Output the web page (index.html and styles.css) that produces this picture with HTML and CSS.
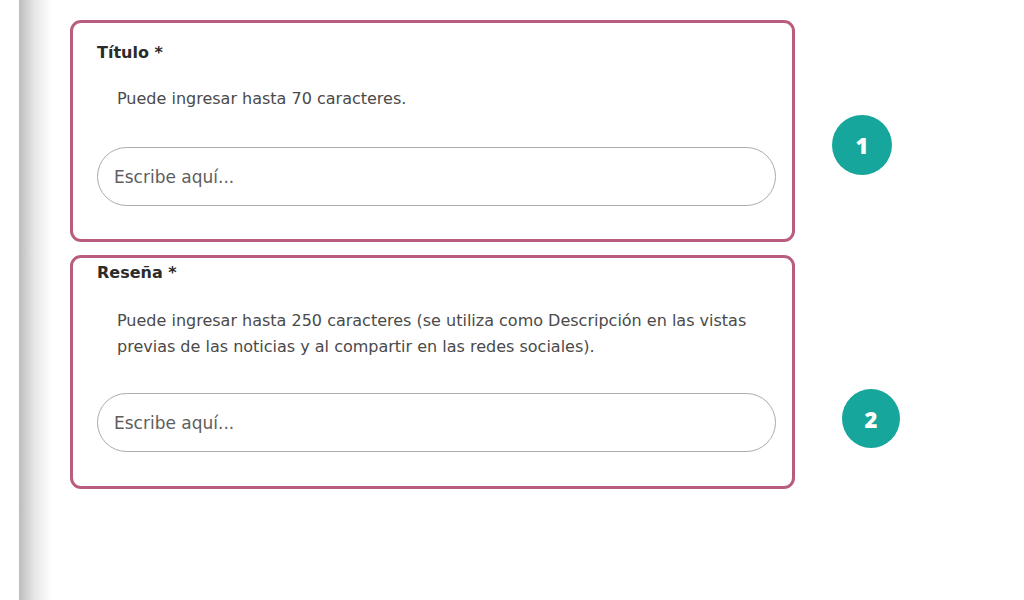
FILE: index.html
```html
<!DOCTYPE html>
<html lang="es">
<head>
<meta charset="utf-8">
<title>Formulario</title>
<link rel="stylesheet" href="styles.css">
</head>
<body>
<div class="page">
  <div class="rail"></div>
  <main class="form">
    <div class="row">
      <section class="field field--title">
        <label class="label" for="titulo">Título *</label>
        <p class="help">Puede ingresar hasta 70 caracteres.</p>
        <input id="titulo" class="input" type="text" placeholder="Escribe aquí...">
      </section>
      <span class="badge badge--one">1</span>
    </div>
    <div class="row">
      <section class="field field--review">
        <label class="label" for="resena">Reseña *</label>
        <p class="help">Puede ingresar hasta 250 caracteres (se utiliza como Descripción en las vistas previas de las noticias y al compartir en las redes sociales).</p>
        <input id="resena" class="input" type="text" placeholder="Escribe aquí...">
      </section>
      <span class="badge badge--two">2</span>
    </div>
  </main>
</div>
</body>
</html>
```

FILE: styles.css
```css
html, body {
  margin: 0;
  padding: 0;
  background: #ffffff;
}

body {
  font-family: "DejaVu Sans", "Open Sans", sans-serif;
  color: #333333;
}

.page {
  display: flex;
  width: 1024px;
  height: 600px;
  overflow: hidden;
}

.rail {
  flex: 0 0 52px;
  background: linear-gradient(to right, #ffffff 0, #ffffff 19px, #bcbcbc 19px, #e6e6e6 34px, #ffffff 52px);
}

.form {
  display: flex;
  flex-direction: column;
  gap: 13px;
  margin-left: 18px;
  padding-top: 20px;
}

.row {
  display: flex;
  align-items: flex-start;
}

.field {
  box-sizing: border-box;
  width: 725px;
  border: 3px solid #b95d80;
  border-radius: 11px;
  padding: 0 16px 0 24px;
  display: flex;
  flex-direction: column;
}

.field--title {
  height: 222px;
  padding-top: 18px;
}

.field--review {
  height: 234px;
  padding-top: 3px;
}

.label {
  display: block;
  font-size: 16px;
  font-weight: 700;
  line-height: 24px;
  color: #2b2b2b;
}

.help {
  margin: 0;
  padding: 0 12px 0 20px;
  font-size: 16px;
  line-height: 26px;
  color: #4a4a4a;
}

.field--title .help {
  margin-top: 21px;
  margin-bottom: 35px;
}

.field--review .help {
  margin-top: 23px;
  margin-bottom: 33px;
}

.input {
  box-sizing: border-box;
  width: 679px;
  height: 59px;
  margin: 0;
  border: 1.5px solid #ababab;
  border-radius: 30px;
  padding: 0 16px;
  font-family: inherit;
  font-size: 17px;
  color: #333333;
  background: #ffffff;
  outline: none;
}

.input::placeholder {
  color: #5e5e5e;
  opacity: 1;
}

.badge {
  flex: 0 0 auto;
  width: 60px;
  height: 60px;
  border-radius: 50%;
  background: #17a69b;
  color: #ffffff;
  font-family: "Open Sans", sans-serif;
  font-weight: 800;
  font-size: 22px;
  display: flex;
  align-items: center;
  justify-content: center;
}

.badge--one {
  margin-left: 37px;
  margin-top: 95px;
}

.badge--two {
  width: 58px;
  height: 59px;
  margin-left: 47px;
  margin-top: 134px;
}
```
